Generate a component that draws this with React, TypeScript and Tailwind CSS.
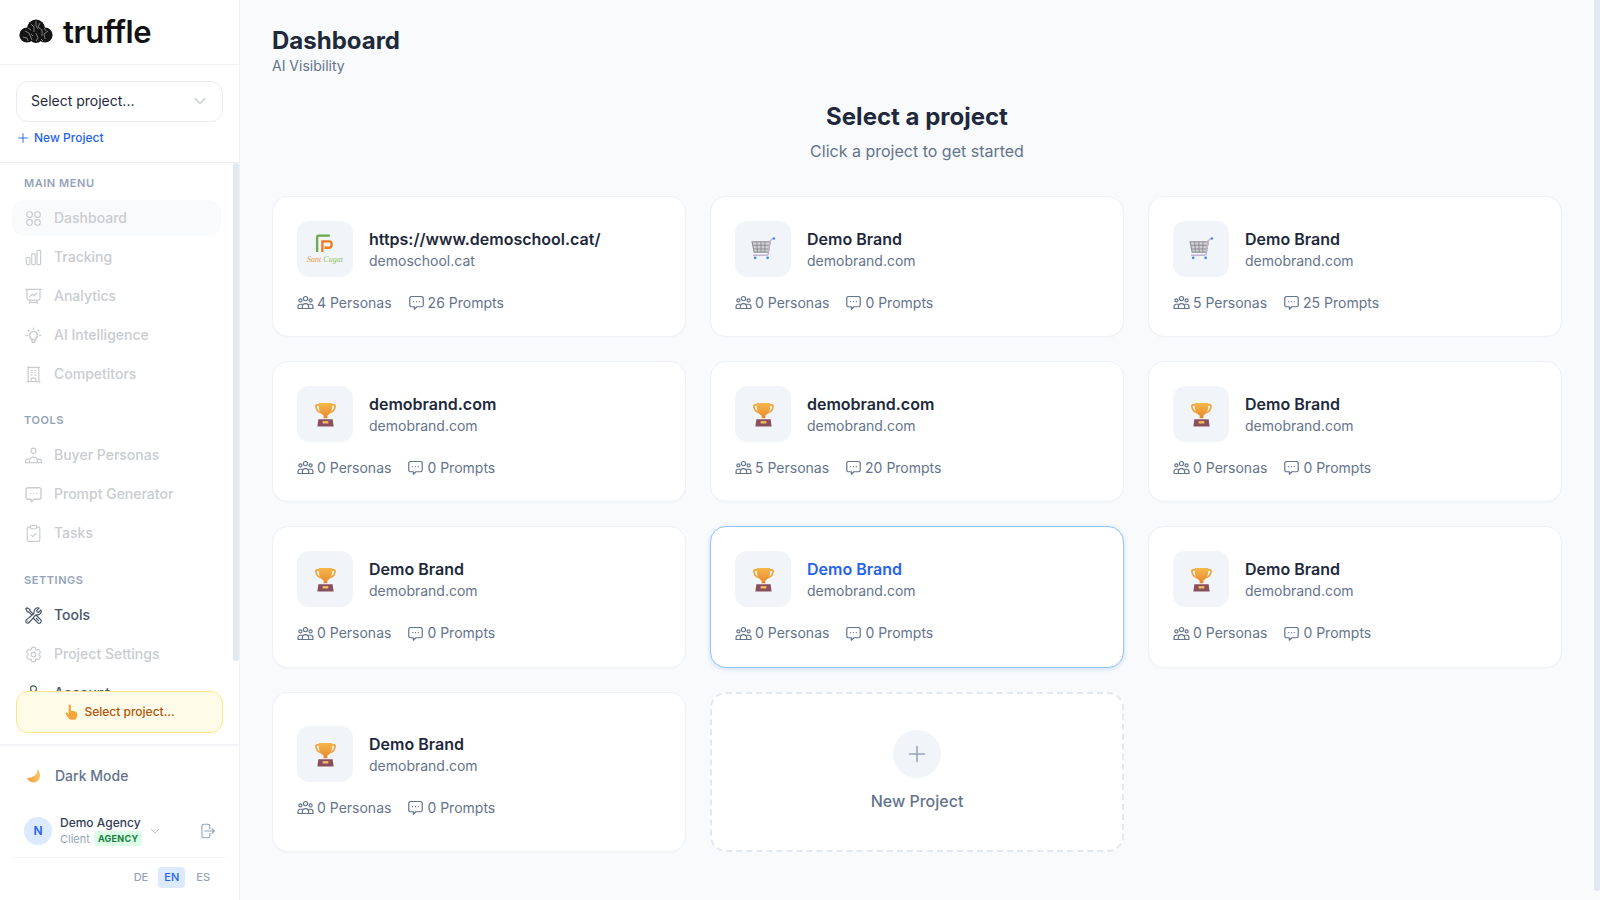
import React from "react";
import { HiOutlineChartBar, HiOutlinePresentationChartLine, HiOutlineBuildingOffice, HiOutlineWrenchScrewdriver, HiOutlineCog6Tooth, HiOutlineUser, HiOutlineArrowRightOnRectangle, HiOutlineChevronDown, HiOutlinePlus } from "react-icons/hi2";
import { TbBulb } from "react-icons/tb";
import { ClipboardCheck } from "lucide-react";

type IconProps = { className?: string };

function DashIcon({ className }: IconProps) {
  return (
    <svg viewBox="0 0 24 24" fill="none" stroke="currentColor" strokeWidth="1.5" className={className}>
      <rect x="3.500" y="3.500" width="7" height="7" rx="3" />
      <rect x="13.500" y="3.500" width="7" height="7" rx="3" />
      <rect x="3.500" y="13.500" width="7" height="7" rx="3" />
      <rect x="13.500" y="13.500" width="7" height="7" rx="3" />
    </svg>
  );
}

function PersonaNav({ className }: IconProps) {
  return (
    <svg viewBox="0 0 24 24" fill="none" stroke="currentColor" strokeWidth="1.5" strokeLinejoin="round" className={className}>
      <circle cx="12" cy="6" r="3.200" />
      <path d="M7 21v-2a5 5 0 0 1 10 0v2" />
      <path d="M7 16.500H5a3 3 0 0 0-3 3V21h20v-1.500a3 3 0 0 0-3-3h-2" />
    </svg>
  );
}

function PeopleIcon({ className }: IconProps) {
  return (
    <svg viewBox="0 0 24 24" fill="none" stroke="currentColor" strokeWidth="1.7" strokeLinejoin="round" strokeLinecap="round" className={className}>
      <circle cx="12" cy="6.500" r="3" />
      <circle cx="4.800" cy="9" r="2.200" />
      <circle cx="19.200" cy="9" r="2.200" />
      <path d="M7.500 20.500v-2.500a4.500 4.500 0 0 1 9 0v2.500" />
      <path d="M7.500 14.500H4.500A3 3 0 0 0 1.500 17.500v3h21v-3a3 3 0 0 0-3-3h-3" />
    </svg>
  );
}

function ChatIcon({ className }: IconProps) {
  return (
    <svg viewBox="0 0 24 24" fill="none" stroke="currentColor" strokeWidth="1.7" strokeLinejoin="round" className={className}>
      <path d="M5 3.500h14A2.500 2.500 0 0 1 21.500 6v9.500A2.500 2.500 0 0 1 19 18h-6.500L9 21.500V18H5a2.500 2.500 0 0 1-2.500-2.500V6A2.500 2.500 0 0 1 5 3.500z" />
      <circle cx="8" cy="10.800" r="0.900" fill="currentColor" stroke="none" />
      <circle cx="12" cy="10.800" r="0.900" fill="currentColor" stroke="none" />
      <circle cx="16" cy="10.800" r="0.900" fill="currentColor" stroke="none" />
    </svg>
  );
}

function TaskIcon({ className }: IconProps) {
  return <ClipboardCheck className={className} strokeWidth={1.5} />;
}

function Logo() {
  return (
    <svg width="34" height="26" viewBox="0 0 34 26" className="shrink-0">
      <g fill="#141414">
        <circle cx="17" cy="9.500" r="9" />
        <circle cx="8" cy="16" r="7.600" />
        <circle cx="26" cy="16" r="7.600" />
        <circle cx="17" cy="17" r="7" />
      </g>
      <g fill="none" stroke="#d8d8d8" strokeWidth="0.55">
        <path d="M12 5l3 3v5M21 4l-2 4 4 3v6M17 2v5l2 3M6 12l4 2 3 7M29 12l-4 3 1 5M17 14l2 5-2 3M4 18l4 1 1 3M9 9l3 2M25 9l2 3M14 17l-2-2M22 20l2 2" />
      </g>
    </svg>
  );
}

function Trophy() {
  return (
    <svg width="21" height="25" viewBox="0 0 22 26">
      <defs>
        <linearGradient id="tg" x1="0" y1="0" x2="0" y2="1">
          <stop offset="0" stopColor="#f6b84a" />
          <stop offset="1" stopColor="#e8862c" />
        </linearGradient>
      </defs>
      <path d="M5 3H2.200C1.200 3 .8 3.800 1 5c.5 3 2 5.200 5 6M17 3h2.800c1 0 1.400.8 1.200 2-.5 3-2 5.200-5 6" fill="none" stroke="#f0a53c" strokeWidth="1.800" />
      <path d="M4 1h14c.4 6-.6 11-5 13v3H9v-3C4.600 12 3.600 7 4 1z" fill="url(#tg)" />
      <path d="M3.500 18h15l1 7.500h-17z" fill="#8a4f5e" />
      <rect x="8" y="20" width="6" height="2.400" fill="#f6c15a" />
    </svg>
  );
}

function Cart() {
  return (
    <svg width="25" height="25" viewBox="0 0 24 24">
      <path d="M1 4.500h17.500l-1.800 10H3z" fill="#cfcfd2" stroke="#8f8f95" strokeWidth="1" />
      <path d="M2 8h16M2.700 11.500h14.500M5.500 4.500l.7 10M9.500 4.500l.2 10M13.500 4.500l-.3 10" stroke="#84848a" strokeWidth="0.800" fill="none" />
      <path d="M21 1.500l-2.500 2-1.800 12c0 1.500-1 2-2 2H2" fill="none" stroke="#c3b3cf" strokeWidth="1.300" />
      <circle cx="22" cy="1.500" r="1.200" fill="#4f86d8" />
      <circle cx="4" cy="20" r="1.300" fill="#4f86d8" />
      <circle cx="16" cy="20" r="1.300" fill="#4f86d8" />
    </svg>
  );
}

function SchoolLogo() {
  return (
    <div className="flex flex-col items-center">
      <svg width="19" height="19" viewBox="0 0 18 18">
        <path d="M2 17V3c0-1 .6-1.500 1.500-1.500H14" fill="none" stroke="#6aa84f" strokeWidth="2.200" />
        <path d="M7 17V7h6.500c3 0 3 6 0 6H9" fill="none" stroke="#ee7b22" strokeWidth="2.200" />
      </svg>
      <span className="text-[8px] leading-[9px] italic mt-[2px] text-[#e9954f] font-['Liberation_Serif',serif] whitespace-nowrap">Sant <span className="text-[#8fbf5a]">Cugat</span></span>
    </div>
  );
}

function Moon() {
  return (
    <svg width="16" height="16" viewBox="0 0 16 16">
      <defs>
        <linearGradient id="mg" x1="1" y1="0" x2="0" y2="0">
          <stop offset="0" stopColor="#f9c56e" />
          <stop offset="1" stopColor="#f29a3e" />
        </linearGradient>
      </defs>
      <path d="M11.500 1C12 6 8 9.500 1 10.300 3 14.500 8 15.500 11 13.500 15 11 15 5 11.500 1z" fill="url(#mg)" />
    </svg>
  );
}

function Hand() {
  return (
    <svg width="16" height="17" viewBox="0 0 13 15">
      <path d="M3.500 1.500c0-1.300 2-1.300 2 0v4.800l1-.3 1 .2 1 .3 1 .2 1.200.8c.5.600.5 2 .2 3.500-.4 1.800-1.400 3-3.400 3H6c-1.500 0-2.400-1-3-2L1 9c-.6-1 .7-2 1.500-1.200l1 1.200z" fill="#f5a53c" />
    </svg>
  );
}

const nav = [
  {
    label: "MAIN MENU",
    cls: "",
    items: [
      { name: "Dashboard", icon: DashIcon, active: true },
      { name: "Tracking", icon: HiOutlineChartBar },
      { name: "Analytics", icon: HiOutlinePresentationChartLine },
      { name: "AI Intelligence", icon: TbBulb },
      { name: "Competitors", icon: HiOutlineBuildingOffice },
    ],
  },
  {
    label: "TOOLS",
    cls: "mt-5",
    items: [
      { name: "Buyer Personas", icon: PersonaNav },
      { name: "Prompt Generator", icon: ChatIcon },
      { name: "Tasks", icon: TaskIcon },
    ],
  },
  {
    label: "SETTINGS",
    cls: "mt-[21px]",
    items: [
      { name: "Tools", icon: HiOutlineWrenchScrewdriver, enabled: true },
      { name: "Project Settings", icon: HiOutlineCog6Tooth },
      { name: "Account", icon: HiOutlineUser, enabled: true },
    ],
  },
];

type P = { title: string; domain: string; personas: number; prompts: number; logo: "school" | "cart" | "trophy"; selected?: boolean };
const projects: P[] = [
  { title: "https://www.demoschool.cat/", domain: "demoschool.cat", personas: 4, prompts: 26, logo: "school" },
  { title: "Demo Brand", domain: "demobrand.com", personas: 0, prompts: 0, logo: "cart" },
  { title: "Demo Brand", domain: "demobrand.com", personas: 5, prompts: 25, logo: "cart" },
  { title: "demobrand.com", domain: "demobrand.com", personas: 0, prompts: 0, logo: "trophy" },
  { title: "demobrand.com", domain: "demobrand.com", personas: 5, prompts: 20, logo: "trophy" },
  { title: "Demo Brand", domain: "demobrand.com", personas: 0, prompts: 0, logo: "trophy" },
  { title: "Demo Brand", domain: "demobrand.com", personas: 0, prompts: 0, logo: "trophy" },
  { title: "Demo Brand", domain: "demobrand.com", personas: 0, prompts: 0, logo: "trophy", selected: true },
  { title: "Demo Brand", domain: "demobrand.com", personas: 0, prompts: 0, logo: "trophy" },
  { title: "Demo Brand", domain: "demobrand.com", personas: 0, prompts: 0, logo: "trophy" },
];

function Card({ p }: { p: P }) {
  return (
    <div className={"flex flex-col justify-center rounded-2xl bg-white p-6 border " + (p.selected ? "border-[#93c5fd] shadow-[0_1px_4px_rgba(59,130,246,0.25)]" : "border-[#eef1f6] shadow-[0_1px_2px_rgba(0,0,0,0.02)]")}>
      <div className="flex items-center gap-4 mb-4">
        <div className="w-14 h-14 rounded-xl bg-[#f1f5f9] flex items-center justify-center shrink-0">
          {p.logo === "school" ? <SchoolLogo /> : p.logo === "cart" ? <Cart /> : <Trophy />}
        </div>
        <div className="min-w-0">
          <div className={"text-base font-semibold leading-6 " + (p.selected ? "text-[#2563eb]" : "text-[#1e293b]")}>{p.title}</div>
          <div className="text-sm leading-5 text-[#64748b]">{p.domain}</div>
        </div>
      </div>
      <div className="flex items-center gap-4 text-sm leading-[19.2px] text-[#64748b]">
        <span className="flex items-center gap-[3px]"><PeopleIcon className="w-[17px] h-[17px]" />{p.personas} Personas</span>
        <span className="flex items-center gap-[3px]"><ChatIcon className="w-[17px] h-[17px]" />{p.prompts} Prompts</span>
      </div>
    </div>
  );
}

export default function App() {
  return (
    <div className="flex h-screen w-full overflow-hidden bg-[#f8fafc] font-['Inter',sans-serif]">
      <aside className="w-60 shrink-0 h-full bg-white border-r border-[#eef1f6] flex flex-col">
        <div className="h-[65px] shrink-0 border-b border-[#eef1f6] flex items-center gap-[10px] pl-[19px] pb-[1px]">
          <Logo />
          <span className="text-[31px] leading-none font-semibold tracking-[-0.5px] text-[#111111]">truffle</span>
        </div>
        <div className="shrink-0 h-[98px] border-b border-[#eef1f6] px-4 pt-[15.5px]">
          <div className="h-[41px] rounded-xl border border-[#e8ecf2] flex items-center justify-between pl-[14px] pr-[14px] text-sm text-[#1e293b]">
            <span>Select project...</span>
            <HiOutlineChevronDown className="w-4 h-4 text-[#94a3b8]" />
          </div>
          <div className="mt-[8.5px] flex items-center gap-1 text-xs font-medium text-[#2563eb]">
            <HiOutlinePlus className="w-[14px] h-[14px] stroke-[1.6]" />
            <span>New Project</span>
          </div>
        </div>
        <div className="relative h-[528px] shrink-0 overflow-hidden">
          <nav className="px-3 pt-3 pb-3 w-[234px] flex flex-col">
            {nav.map((g) => (
              <div key={g.label} className={g.cls}>
                <div className="px-3 h-[16px] mb-[9px] text-[11px] leading-[16px] font-semibold tracking-[0.55px] text-[#94a3b8]">{g.label}</div>
                <div className="flex flex-col gap-[3px]">
                  {g.items.map((it) => {
                    const I = it.icon;
                    return (
                      <div key={it.name} className={"h-9 flex items-center gap-[11px] px-3 rounded-xl w-[209px] text-sm font-medium " + ((it as any).active ? "bg-[#f9fafb] " : "") + ((it as any).enabled ? "text-[#475569]" : "text-[#c9ccd1]")}>
                        <I className="w-[19px] h-[19px] shrink-0" />
                        <span>{it.name}</span>
                      </div>
                    );
                  })}
                </div>
              </div>
            ))}
          </nav>
          <div className="absolute right-0 top-0 w-[6px] h-[498px] rounded-full bg-[#e2e8f0]" />
        </div>
        <div className="relative z-10 shrink-0 mx-4 h-[42px] rounded-xl border border-[#fde68a] bg-[#fefce8] flex items-center justify-center gap-[4px] text-xs font-medium text-[#b45309]">
          <Hand />
          <span>Select project...</span>
        </div>
        <div className="mt-[11px] border-t-2 border-[#f3f4f9] flex-1 flex flex-col min-h-0">
          <div className="flex items-center gap-[13px] pl-[26px] pt-[12px] h-[48px] text-sm font-medium text-[#64748b]">
            <Moon />
            <span>Dark Mode</span>
          </div>
          <div className="flex items-center pl-6 mt-[23px] h-7">
            <div className="w-7 h-7 rounded-full bg-[#dbeafe] flex items-center justify-center text-xs font-semibold text-[#2563eb]">N</div>
            <div className="ml-[8px] w-[85px] -mt-[2px]">
              <div className="text-xs leading-[15px] font-medium text-[#334155]">Demo Agency</div>
              <div className="flex items-center gap-[4px] mt-[2px] h-[14px] text-[11px] leading-[14px] text-[#94a3b8]">
                <span>Client</span>
                <span className="px-[4px] rounded bg-[#dcfce7] text-[#15803d] text-[9px] leading-[15px] font-bold tracking-[0.3px]">AGENCY</span>
              </div>
            </div>
            <HiOutlineChevronDown className="w-3 h-3 text-[#94a3b8] ml-[4px]" />
            <HiOutlineArrowRightOnRectangle className="w-[18px] h-[18px] text-[#94a3b8] ml-[37px]" />
          </div>
          <div className="mx-3 mt-[12px] border-t border-[#f5f6f9] flex items-center justify-end pr-[6px] pt-[9px] text-[11px] font-medium text-[#94a3b8]">
            <span className="h-[21px] px-[10px] flex items-center">DE</span>
            <span className="h-[21px] w-[27px] justify-center flex items-center rounded bg-[#dbeafe] text-[#2563eb]">EN</span>
            <span className="h-[21px] px-[11px] flex items-center">ES</span>
          </div>
        </div>
      </aside>
      <main className="flex-1 min-w-0 h-full overflow-hidden px-8 pt-[26px]">
        <h1 className="text-2xl font-bold leading-[30px] text-[#1e293b]">Dashboard</h1>
        <p className="text-sm leading-5 text-[#64748b]">AI Visibility</p>
        <div className="text-center mt-[25px] mb-[33px]">
          <h2 className="text-2xl font-bold leading-8 text-[#1e293b]">Select a project</h2>
          <p className="text-base leading-6 mt-[6px] text-[#64748b]">Click a project to get started</p>
        </div>
        <div className="grid grid-cols-3 gap-6">
          {projects.map((p, i) => <Card key={i} p={p} />)}
          <div className="rounded-2xl bg-white border-2 border-dashed border-[#e2e8f0] flex flex-col items-center pt-9 pb-9">
            <div className="w-12 h-12 rounded-full bg-[#f1f5f9] flex items-center justify-center mb-[11px]">
              <HiOutlinePlus className="w-6 h-6 text-[#94a3b8]" />
            </div>
            <span className="text-base leading-[25px] font-medium text-[#64748b]">New Project</span>
          </div>
        </div>
      </main>
      <div className="w-[6px] h-[891px] shrink-0 rounded-b-full bg-[#e2e8f0]" />
    </div>
  );
}
